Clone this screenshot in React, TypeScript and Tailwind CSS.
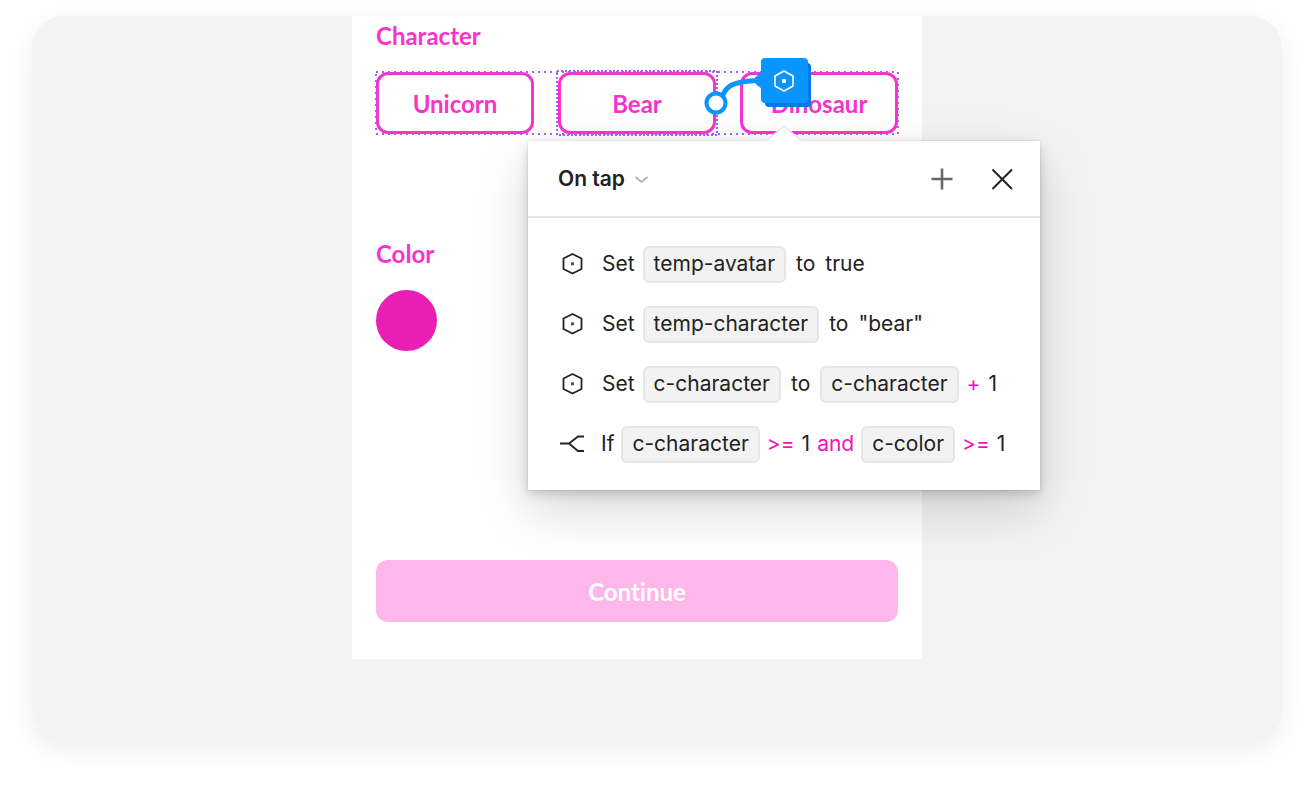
import { useState } from "react"
import type { ReactNode } from "react"
import clsx from "clsx"

type Token = { kind: "text" | "variable" | "operator"; value: string }

interface Action {
  icon: "variable" | "branch"
  tokens: Token[]
}

const text = (value: string): Token => ({ kind: "text", value })
const variable = (value: string): Token => ({ kind: "variable", value })
const operator = (value: string): Token => ({ kind: "operator", value })

const actions: Action[] = [
  { icon: "variable", tokens: [text("Set"), variable("temp-avatar"), text("to"), text("true")] },
  { icon: "variable", tokens: [text("Set"), variable("temp-character"), text("to"), text('"bear"')] },
  {
    icon: "variable",
    tokens: [text("Set"), variable("c-character"), text("to"), variable("c-character"), operator("+"), text("1")],
  },
  {
    icon: "branch",
    tokens: [
      text("If"),
      variable("c-character"),
      operator(">="),
      text("1"),
      operator("and"),
      variable("c-color"),
      operator(">="),
      text("1"),
    ],
  },
]

function VariableIcon() {
  return (
    <svg className="size-7 shrink-0" viewBox="0 0 28 28" fill="none" aria-hidden="true">
      <path d="M14.5 4 23.5 8.500v10.500l-9 4.500-9-4.500V8.500z" stroke="#222" strokeWidth="1.8" strokeLinejoin="round" />
      <rect x="13" y="12.300" width="3" height="3" fill="#555" />
    </svg>
  )
}

function BranchIcon() {
  return (
    <svg className="size-7 shrink-0" viewBox="0 0 28 28" fill="none" aria-hidden="true">
      <path d="M2 13.500h9M26 6.500h-6l-9 7 9 7.500h6" stroke="#222" strokeWidth="1.800" />
    </svg>
  )
}

function CharacterButton({ children }: { children: ReactNode }) {
  return (
    <button
      type="button"
      className="h-[62px] w-full rounded-xl border-3 border-[#f733cc] pt-0.5 text-2xl font-bold text-[#f733cc]"
    >
      {children}
    </button>
  )
}

function Connector() {
  return (
    <svg
      className="absolute -top-4 left-full z-20 -ml-3 h-16 w-28"
      viewBox="0 0 112 64"
      fill="none"
      aria-hidden="true"
    >
      <path d="M18 41C22 30 28 25.500 54 24.500" stroke="#0895ff" strokeWidth="5" />
      <path d="M58 15c-2 3-7 5-8 9 1 5 5 6 8 9z" fill="#0895ff" />
      <rect x="61" y="7" width="46" height="44" rx="4" fill="#007be5" />
      <rect x="57" y="2" width="47" height="45" rx="4" fill="#0895ff" />
      <path d="m80 15 9 5v10l-9 5-9-5v-10z" stroke="#fff" strokeWidth="1.600" strokeLinejoin="round" />
      <rect x="78" y="23" width="4" height="4" rx="1" fill="#fff" />
      <circle cx="12" cy="47" r="9.500" fill="#fff" stroke="#0895ff" strokeWidth="4" />
    </svg>
  )
}

function ActionRow({ icon, tokens }: Action) {
  return (
    <li className={clsx("flex h-9 items-center whitespace-nowrap", icon === "branch" ? "gap-[7px]" : "gap-2")}>
      <span className="mr-2">{icon === "branch" ? <BranchIcon /> : <VariableIcon />}</span>
      {tokens.map(({ kind, value }, i) => {
        if (kind === "variable")
          return (
            <span
              key={i}
              className="flex h-[37px] items-center rounded-md border-2 border-[#e6e6e6] bg-[#f2f2f2] px-[9px]"
            >
              {value}
            </span>
          )
        return (
          <span key={i} className={clsx(kind === "operator" && "text-[#f512bd]", value === "to" && "px-0.5")}>
            {value}
          </span>
        )
      })}
    </li>
  )
}

function InteractionPopover() {
  const [trigger, setTrigger] = useState("On tap")

  return (
    <section
      aria-label="Interaction"
      className="absolute top-[69px] -left-[30px] z-10 w-[512px] bg-white font-['Inter',sans-serif] text-[21px] text-[#222] shadow-[0_0_2px_rgba(0,0,0,0.14),0_4px_10px_rgba(0,0,0,0.16),0_20px_50px_rgba(0,0,0,0.16)]"
    >
      <svg className="absolute -top-4 left-[236px] h-4 w-10" viewBox="0 0 40 16" fill="none" aria-hidden="true">
        <path d="M2 16 20 1l18 15z" fill="#fff" />
        <path d="M2 16 20 1l18 15" stroke="#e5e5e5" strokeWidth="1.500" />
        <path d="M5 16 20 3l15 13z" fill="#fff" />
      </svg>

      <header className="flex h-[77px] items-center justify-between border-b-2 border-[#e5e5e5] pr-[22px] pl-[30px]">
        <div className="flex items-center gap-2">
          <select
            aria-label="Trigger"
            value={trigger}
            onChange={(e) => setTrigger(e.target.value)}
            className="appearance-none font-semibold"
          >
            <option>On tap</option>
          </select>
          <svg className="h-4 w-4" viewBox="0 0 16 16" fill="none" aria-hidden="true">
            <path d="m2.500 6 6 5 6-5" stroke="#b3b3b3" strokeWidth="1.800" />
          </svg>
        </div>
        <div className="flex gap-7">
          <button type="button" aria-label="Add action" className="size-8">
            <svg viewBox="0 0 32 32" fill="none" aria-hidden="true">
              <path d="M16 5.500v21M5.500 16h21" stroke="#666" strokeWidth="2.600" />
            </svg>
          </button>
          <button type="button" aria-label="Close" className="size-8">
            <svg viewBox="0 0 32 32" fill="none" aria-hidden="true">
              <path d="m6.500 6.500 19.500 19.500M26 6.500 6.500 26" stroke="#222" strokeWidth="2" />
            </svg>
          </button>
        </div>
      </header>

      <ul className="flex flex-col gap-6 py-7 pl-[30px]">
        {actions.map((action, i) => (
          <ActionRow key={i} {...action} />
        ))}
      </ul>
    </section>
  )
}

export default function App() {
  return (
    <div className="bg-white px-8 pt-4 pb-12 font-['Lato',sans-serif] [font-variant-ligatures:no-common-ligatures]">
      <main className="flex justify-center rounded-[32px] bg-[#f3f3f3] pr-10 pb-[83px] shadow-[0_8px_24px_rgba(0,0,0,0.07)]">
        <div className="w-full max-w-[570px] bg-white px-6 pt-2 pb-[37px]">
          <h2 className="text-2xl leading-6 font-bold text-[#f733cc]">Character</h2>
          <div className="relative mt-6 grid grid-cols-3 gap-6">
            <CharacterButton>Unicorn</CharacterButton>
            <div className="relative">
              <CharacterButton>Bear</CharacterButton>
              <svg className="absolute -inset-0.5 h-[66px] w-[162px]" fill="none" aria-hidden="true">
                <rect x="1" y="1" width="160" height="64" stroke="#a560f5" strokeWidth="2" strokeDasharray="2 2" />
              </svg>
              <Connector />
              <InteractionPopover />
            </div>
            <CharacterButton>Dinosaur</CharacterButton>
            <svg
              className="pointer-events-none absolute inset-0 h-full w-full overflow-visible"
              fill="none"
              aria-hidden="true"
            >
              <rect width="100%" height="100%" stroke="#a560f5" strokeWidth="2" strokeDasharray="2 4" />
            </svg>
          </div>

          <h2 className="mt-[108px] text-2xl leading-6 font-bold text-[#f733cc]">Color</h2>
          <button type="button" aria-label="Pink" className="mt-6 block size-[61px] rounded-full bg-[#e81eb5]" />

          <button
            type="button"
            className="mt-[209px] h-[62px] w-full rounded-xl bg-[#fdb7ea] pt-0.5 text-2xl font-bold text-white"
          >
            Continue
          </button>
        </div>
      </main>
    </div>
  )
}
